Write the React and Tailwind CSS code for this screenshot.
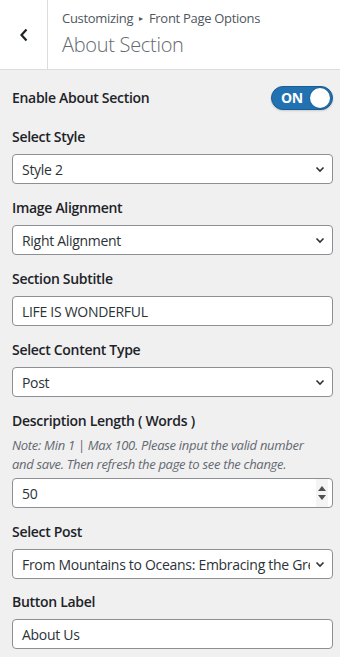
import React from 'react';

const Chevron = () => (
    <svg width="12" height="12" viewBox="0 0 12 12" className="shrink-0">
        <path d="M2.5 4.5 L6 8 L9.5 4.5" fill="none" stroke="#2c3338" strokeWidth="1.6" />
    </svg>
);

const Label = ({ children }) => (
    <div className="text-[14px] font-semibold text-[#1d2327] leading-[20px]">{children}</div>
);

const SelectBox = ({ value }) => (
    <div className="mt-[7px] h-[30px] bg-white border border-[#8c8f94] rounded-[4px] flex items-center pl-[9px] pr-[6px] gap-1">
        <span className="flex-1 whitespace-nowrap overflow-hidden text-[14px] text-[#2c3338]">{value}</span>
        <Chevron />
    </div>
);

const TextBox = ({ value, spinner }) => (
    <div className="mt-[7px] h-[30px] bg-white border border-[#8c8f94] rounded-[4px] flex items-center pl-[9px] pr-[4px]">
        <span className="flex-1 text-[14px] text-[#2c3338]">{value}</span>
        {spinner && (
            <div className="flex flex-col items-center justify-center w-[12px] h-full bg-[#f4f4f4]">
                <svg width="8" height="5" viewBox="0 0 8 5"><path d="M0 5 L4 0 L8 5 Z" fill="#505050" /></svg>
                <div className="h-[4px]" />
                <svg width="8" height="5" viewBox="0 0 8 5"><path d="M0 0 L4 5 L8 0 Z" fill="#505050" /></svg>
            </div>
        )}
    </div>
);

export default function App() {
    return (
        <div className="w-[340px] h-[657px] bg-[#f0f0f1] overflow-hidden tracking-[-0.3px]" style={{ fontFamily: '"Open Sans", "Noto Sans", sans-serif' }}>
            {/* Header */}
            <div className="h-[70px] bg-white border-b border-[#dcdcde] flex">
                <div className="w-[48px] border-r border-[#dcdcde] flex items-center justify-center">
                    <svg width="12" height="16" viewBox="0 0 12 16">
                        <path d="M8.5 2.5 L3.5 8 L8.5 13.5" fill="none" stroke="#1d2327" strokeWidth="2.2" />
                    </svg>
                </div>
                <div className="pl-[14px] pt-[9px]">
                    <div className="text-[13px] text-[#50575e] leading-[18px] flex items-center gap-[6px]">
                        <span>Customizing</span>
                        <span className="text-[8px]">▸</span>
                        <span>Front Page Options</span>
                    </div>
                    <div className="text-[20px] font-light text-[#646970] leading-[28px] mt-[4px]">About Section</div>
                </div>
            </div>

            <div className="pl-[12px] pr-[7px] pt-[16px]">
                <div className="flex items-center justify-between h-[24px]">
                    <Label>Enable About Section</Label>
                    <div className="w-[62px] h-[24px] rounded-full bg-[#2271b1] border border-[#1a5d93] flex items-center justify-between pl-[9px] pr-[2px] shadow-[0_1px_2px_rgba(0,0,0,0.15)]">
                        <span className="text-white text-[14px] font-bold leading-none">ON</span>
                        <span className="w-[20px] h-[20px] rounded-full bg-white shadow-[0_0_2px_rgba(0,0,0,0.3)]" />
                    </div>
                </div>

                <div className="mt-[17px]">
                    <Label>Select Style</Label>
                    <SelectBox value="Style 2" />
                </div>
                <div className="mt-[14px]">
                    <Label>Image Alignment</Label>
                    <SelectBox value="Right Alignment" />
                </div>
                <div className="mt-[14px]">
                    <Label>Section Subtitle</Label>
                    <TextBox value="LIFE IS WONDERFUL" />
                </div>
                <div className="mt-[14px]">
                    <Label>Select Content Type</Label>
                    <SelectBox value="Post" />
                </div>
                <div className="mt-[14px]">
                    <Label>Description Length ( Words )</Label>
                    <div className="mt-[5px] max-w-[302px] text-[13px] italic text-[#646970] leading-[19px]">
                        Note: Min 1 | Max 100. Please input the valid number and save. Then refresh the page to see the change.
                    </div>
                    <div className="-mt-[3px]">
                        <TextBox value="50" spinner />
                    </div>
                </div>
                <div className="mt-[14px]">
                    <Label>Select Post</Label>
                    <SelectBox value="From Mountains to Oceans: Embracing the Great Outdoors" />
                </div>
                <div className="mt-[13px]">
                    <Label>Button Label</Label>
                    <TextBox value="About Us" />
                </div>
            </div>
        </div>
    );
}
